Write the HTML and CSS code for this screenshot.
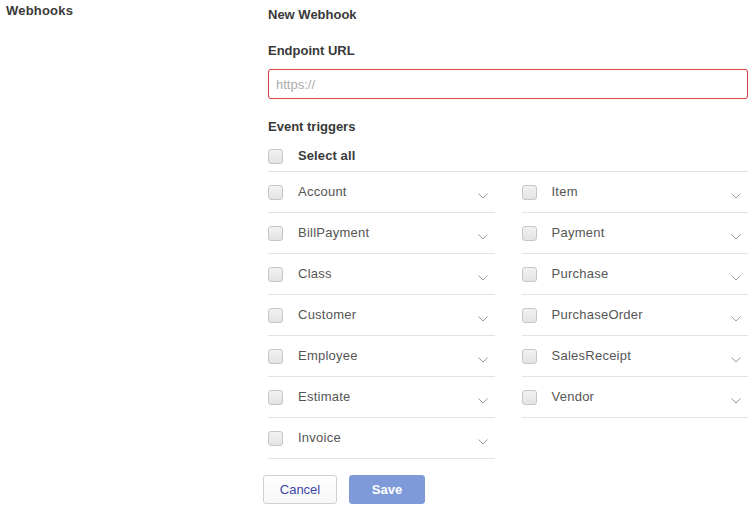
FILE: index.html
```html
<!DOCTYPE html>
<html lang="en">
<head>
<meta charset="utf-8">
<title>Webhooks</title>
<link rel="stylesheet" href="styles.css">
</head>
<body>
<div class="page">
  <aside class="side">
    <h2 class="side-title">Webhooks</h2>
  </aside>
  <main class="main">
    <h3 class="heading">New Webhook</h3>
    <label class="heading field-label" for="url">Endpoint URL</label>
    <input id="url" class="url-input" type="text" placeholder="https://">
    <h3 class="heading triggers-title">Event triggers</h3>
    <div class="select-all">
      <span class="box"></span>
      <span class="select-all-text">Select all</span>
    </div>
    <div class="grid">
      <div class="cell"><span class="box"></span><span class="name">Account</span><svg class="chev" width="10" height="6" viewBox="0 0 10 6"><polyline points="0.5,0.5 5,5 9.5,0.5" fill="none" stroke="#9a9a9a" stroke-width="1"/></svg></div>
      <div class="cell"><span class="box"></span><span class="name">Item</span><svg class="chev" width="10" height="6" viewBox="0 0 10 6"><polyline points="0.5,0.5 5,5 9.5,0.5" fill="none" stroke="#9a9a9a" stroke-width="1"/></svg></div>
      <div class="cell"><span class="box"></span><span class="name">BillPayment</span><svg class="chev" width="10" height="6" viewBox="0 0 10 6"><polyline points="0.5,0.5 5,5 9.5,0.5" fill="none" stroke="#9a9a9a" stroke-width="1"/></svg></div>
      <div class="cell"><span class="box"></span><span class="name">Payment</span><svg class="chev" width="10" height="6" viewBox="0 0 10 6"><polyline points="0.5,0.5 5,5 9.5,0.5" fill="none" stroke="#9a9a9a" stroke-width="1"/></svg></div>
      <div class="cell"><span class="box"></span><span class="name">Class</span><svg class="chev" width="10" height="6" viewBox="0 0 10 6"><polyline points="0.5,0.5 5,5 9.5,0.5" fill="none" stroke="#9a9a9a" stroke-width="1"/></svg></div>
      <div class="cell"><span class="box"></span><span class="name">Purchase</span><svg class="chev" width="10" height="6" viewBox="0 0 10 6"><polyline points="0.5,0.5 5,5 9.5,0.5" fill="none" stroke="#9a9a9a" stroke-width="1"/></svg></div>
      <div class="cell"><span class="box"></span><span class="name">Customer</span><svg class="chev" width="10" height="6" viewBox="0 0 10 6"><polyline points="0.5,0.5 5,5 9.5,0.5" fill="none" stroke="#9a9a9a" stroke-width="1"/></svg></div>
      <div class="cell"><span class="box"></span><span class="name">PurchaseOrder</span><svg class="chev" width="10" height="6" viewBox="0 0 10 6"><polyline points="0.5,0.5 5,5 9.5,0.5" fill="none" stroke="#9a9a9a" stroke-width="1"/></svg></div>
      <div class="cell"><span class="box"></span><span class="name">Employee</span><svg class="chev" width="10" height="6" viewBox="0 0 10 6"><polyline points="0.5,0.5 5,5 9.5,0.5" fill="none" stroke="#9a9a9a" stroke-width="1"/></svg></div>
      <div class="cell"><span class="box"></span><span class="name">SalesReceipt</span><svg class="chev" width="10" height="6" viewBox="0 0 10 6"><polyline points="0.5,0.5 5,5 9.5,0.5" fill="none" stroke="#9a9a9a" stroke-width="1"/></svg></div>
      <div class="cell"><span class="box"></span><span class="name">Estimate</span><svg class="chev" width="10" height="6" viewBox="0 0 10 6"><polyline points="0.5,0.5 5,5 9.5,0.5" fill="none" stroke="#9a9a9a" stroke-width="1"/></svg></div>
      <div class="cell"><span class="box"></span><span class="name">Vendor</span><svg class="chev" width="10" height="6" viewBox="0 0 10 6"><polyline points="0.5,0.5 5,5 9.5,0.5" fill="none" stroke="#9a9a9a" stroke-width="1"/></svg></div>
      <div class="cell"><span class="box"></span><span class="name">Invoice</span><svg class="chev" width="10" height="6" viewBox="0 0 10 6"><polyline points="0.5,0.5 5,5 9.5,0.5" fill="none" stroke="#9a9a9a" stroke-width="1"/></svg></div>
    </div>
    <div class="actions">
      <button class="btn btn-cancel" type="button">Cancel</button>
      <button class="btn btn-save" type="button">Save</button>
    </div>
  </main>
</div>
</body>
</html>
```

FILE: styles.css
```css
* {
  box-sizing: border-box;
}

html, body {
  margin: 0;
  padding: 0;
  background: #ffffff;
}

body {
  font-family: "Liberation Sans", Arial, Helvetica, sans-serif;
  font-size: 13px;
  line-height: 16px;
  color: #393939;
}

.page {
  display: flex;
  width: 754px;
}

.side {
  width: 268px;
  flex: none;
  padding: 3px 0 0 6px;
}

.side-title {
  margin: 0;
  font-size: 13px;
  line-height: 16px;
  font-weight: bold;
  color: #3a3a3a;
  letter-spacing: 0.2px;
}

.main {
  width: 480px;
  flex: none;
  padding-top: 7px;
  display: flex;
  flex-direction: column;
}

.heading {
  display: block;
  margin: 0;
  font-size: 13px;
  line-height: 16px;
  font-weight: bold;
  color: #393939;
}

.field-label {
  margin-top: 20px;
}

.url-input {
  margin-top: 10px;
  height: 30px;
  width: 480px;
  border: 1px solid #e0474c;
  border-radius: 3px;
  padding: 0 7px;
  font-family: "Liberation Sans", Arial, sans-serif;
  font-size: 13px;
  color: #333;
  outline: none;
  box-shadow: 0 0 1px rgba(224, 71, 76, 0.4);
}

.url-input::placeholder {
  color: #ababab;
}

.triggers-title {
  margin-top: 20px;
}

.select-all {
  display: flex;
  align-items: center;
  padding: 13px 0 7px 0;
  border-bottom: 1px solid #e2e2e2;
}

.select-all-text {
  margin-left: 15px;
  font-weight: bold;
  color: #3a3a3a;
  letter-spacing: 0.1px;
}

.box {
  flex: none;
  width: 15px;
  height: 15px;
  border: 1px solid #c6c6c6;
  border-radius: 3px;
  background: linear-gradient(#f2f2f2, #e3e3e3);
}

.grid {
  display: grid;
  grid-template-columns: 1fr 1fr;
  column-gap: 27px;
}

.cell {
  display: flex;
  align-items: center;
  height: 41px;
  border-bottom: 1px solid #e2e2e2;
}

.name {
  margin-left: 15px;
  flex: 1;
  color: #555555;
  letter-spacing: 0.25px;
}

.chev {
  flex: none;
  margin: 7px 7px 0 0;
}

.actions {
  display: flex;
  gap: 12px;
  margin-top: 16px;
  margin-left: -5px;
}

.btn {
  height: 29px;
  border-radius: 3px;
  font-family: "Liberation Sans", Arial, sans-serif;
  font-size: 13px;
  padding: 0;
  cursor: pointer;
}

.btn-cancel {
  width: 74px;
  background: linear-gradient(#ffffff, #f7f7f7);
  border: 1px solid #d0d0d0;
  color: #3f47a8;
}

.btn-save {
  width: 76px;
  background: #7e9ad9;
  border: 1px solid #7e9ad9;
  color: #ffffff;
  font-weight: bold;
}
```
